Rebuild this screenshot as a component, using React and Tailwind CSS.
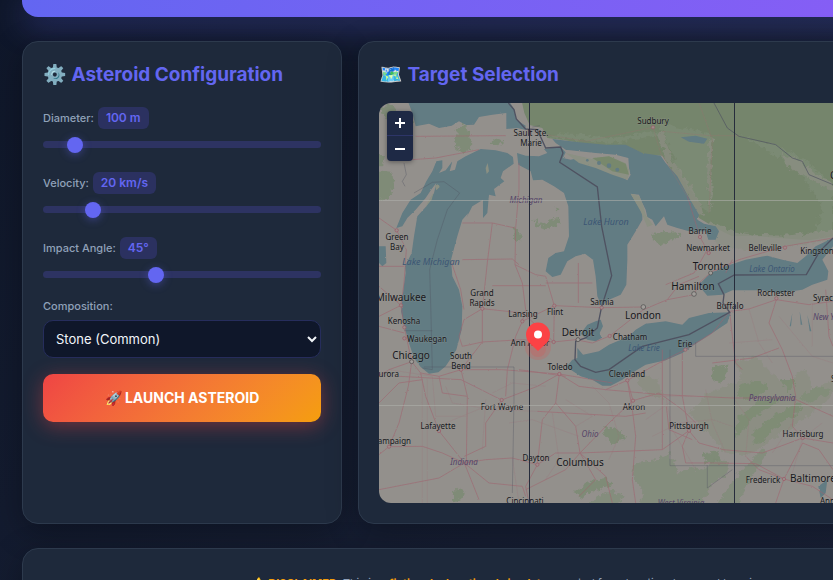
import { useState } from "react";

// city labels: [text, x, y, size, anchor]
const cities = [
  ["Sault Ste.", 152, 33, 8],
  ["Marie", 152, 43, 8],
  ["Sudbury", 274, 21, 8],
  ["Green", 18, 137, 8],
  ["Bay", 18, 147, 8],
  ["Milwaukee", 22, 198, 10],
  ["Kenosha", 25, 221, 8],
  ["Waukegan", 48, 239, 8],
  ["Chicago", 32, 256, 10],
  ["Grand", 103, 193, 8],
  ["Rapids", 103, 203, 8],
  ["Lansing", 144, 214, 8],
  ["Flint", 176, 212, 8],
  ["Sarnia", 223, 202, 8],
  ["London", 264, 216, 10],
  ["Detroit", 199, 233, 10],
  ["Chatham", 251, 237, 8],
  ["Ann Arbor", 151, 243, 8],
  ["Barrie", 321, 131, 8],
  ["Newmarket", 329, 148, 8],
  ["Toronto", 332, 167, 10],
  ["Hamilton", 314, 187, 10],
  ["Belleville", 386, 148, 8],
  ["Kingston", 438, 151, 8],
  ["Rochester", 397, 193, 8],
  ["Syracuse", 434, 198, 8, "start"],
  ["Buffalo", 351, 206, 8],
  ["Erie", 306, 244, 8],
  ["Toledo", 181, 267, 8],
  ["South", 82, 256, 8],
  ["Bend", 82, 266, 8],
  ["Cleveland", 248, 274, 8],
  ["Akron", 255, 307, 8],
  ["Fort Wayne", 123, 307, 8],
  ["Lafayette", 59, 326, 8],
  ["Champaign", 32, 341, 8, "end"],
  ["Aurora", 20, 274, 8, "end"],
  ["Dayton", 157, 358, 8],
  ["Columbus", 201, 363, 10],
  ["Cincinnati", 146, 401, 8],
  ["Pittsburgh", 310, 326, 8],
  ["Harrisburg", 424, 334, 8],
  ["Frederick", 384, 380, 8],
  ["Baltimore", 434, 379, 10],
  ["Annapolis", 441, 401, 8, "start"],
  ["Scranton", 452, 279, 8, "start"],
  ["Ottawa", 451, 76, 10, "start"],
];

const regions = [
  ["Michigan", 147, 100, 8],
  ["Indiana", 85, 362, 8],
  ["Ohio", 211, 334, 8],
  ["Pennsylvania", 393, 298, 8],
  ["West Virginia", 302, 403, 8],
  ["New York", 434, 217, 8, "start"],
];

const lakes = [
  ["Lake Huron", 227, 122, 9],
  ["Lake Michigan", 52, 162, 9],
  ["Lake Ontario", 393, 169, 8],
  ["Lake Erie", 265, 248, 8],
];

const towns = [
  [822, 73], [53, 382], [66, 607], [76, 673], [76, 706], [98, 776], [310, 617],
  [430, 655], [526, 608], [668, 614], [597, 710], [692, 699], [524, 717],
  [963, 402], [989, 450], [1218, 434], [1192, 586], [919, 740], [541, 813],
  [246, 800], [745, 832], [762, 893], [368, 891], [180, 984], [475, 1085],
  [930, 983], [1271, 1005], [1215, 1128], [30, 1031],
];

const panel =
  "rounded-2xl border border-[#2d3a4d] bg-[#1e293b] shadow-[0_8px_32px_rgba(0,0,0,0.3)]";

function Label({ item, fill, italic }) {
  const [text, x, y, size, anchor = "middle"] = item;
  return (
    <text
      x={x}
      y={y}
      fontSize={size}
      textAnchor={anchor}
      fill={fill}
      stroke="#a09d99"
      strokeOpacity={italic ? 0 : 0.35}
      strokeWidth="1"
      paintOrder="stroke"
      fontStyle={italic ? "italic" : "normal"}
    >
      {text}
    </text>
  );
}

function GreatLakesMap() {
  return (
    <svg
      viewBox="0 0 598 400"
      preserveAspectRatio="xMinYMin slice"
      className="h-full w-full font-['Noto_Sans',sans-serif]"
      role="img"
      aria-label="Map of the Great Lakes"
    >
      <defs>
        {/* ragged edges for woods, coastlines and roads */}
        <filter id="woods" x="-5%" y="-5%" width="110%" height="110%">
          <feTurbulence type="fractalNoise" baseFrequency="0.06" numOctaves="4" seed="4" />
          <feDisplacementMap in="SourceGraphic" scale="26" xChannelSelector="R" yChannelSelector="G" />
          <feGaussianBlur stdDeviation="0.5" />
        </filter>
        <filter id="coast" x="-5%" y="-5%" width="110%" height="110%">
          <feTurbulence type="fractalNoise" baseFrequency="0.12" numOctaves="3" seed="9" />
          <feDisplacementMap in="SourceGraphic" scale="5" xChannelSelector="R" yChannelSelector="G" />
        </filter>
      </defs>

      <g transform="scale(0.333333)">
        <rect width="1800" height="1200" fill="#93908c" />

        {/* northern woods */}
        <g filter="url(#coast)">
          <path
            fill="#74856c"
            d="M425 -20H1820V390L1362 400L1290 412L1200 405L1120 398L1060 400L1010 375L960 345L925 280L880 205L850 158L740 150L640 128L560 112L505 105L490 75L452 66L436 30Z"
          />
        </g>
        <g filter="url(#woods)">
          <path
            fill="#7d8b76"
            opacity=".7"
            d="M840 60L870 130L900 210L960 300L990 330L985 220L1000 110L990 90ZM1080 98L1200 130L1290 180L1362 245V400L1310 390L1330 310L1270 220L1180 150ZM505 105L700 120L830 98L840 85L700 105L560 90Z"
          />
          <path
            fill="#918f88"
            opacity=".6"
            d="M1205 150L1255 170L1290 195L1315 215L1362 240V262L1320 245L1280 220L1240 205L1215 175ZM835 90L850 85L880 170L930 240L965 300L975 345L950 325L905 245L870 195ZM988 110L1000 115L997 190L1002 270L992 330L985 220Z"
          />
          <path
            fill="#8c8e84"
            opacity=".8"
            d="M990 350L1050 382L1120 395L1220 398L1362 380V410L1260 425L1080 440L1010 420Z"
          />
        </g>

        {/* smaller forests */}
        <g filter="url(#woods)">
          <g fill="#788a70" opacity=".75">
            <path d="M230 80L260 70L270 95L280 140L250 150L228 130ZM340 105L378 115L360 130L338 122ZM245 48L285 42L275 62L250 65ZM-10 205L40 210L46 260L20 290H-10ZM-10 150L18 155L12 190H-10ZM0 15L40 5L60 30L100 60V80L50 50L20 45Z" />
            <path d="M465 350L495 365L520 345L540 350L545 362L505 375L470 365ZM530 310L542 318L535 330ZM408 370L425 385L424 415L404 412ZM820 390L890 385L905 400L850 425L822 415Z" />
            <path d="M1000 790L1045 785L1040 825L1020 842L995 825ZM1080 850L1110 835L1165 840L1160 870L1110 890L1075 880ZM1205 830L1240 825L1252 850L1225 865Z" />
            <path d="M1120 990L1180 940L1260 900L1275 910L1240 940L1180 980L1150 1020L1125 1025ZM1080 940L1140 890L1220 880L1180 910L1120 945L1090 990L1065 1005Z" />
            <path d="M670 970L720 980L740 1005L700 1025L675 1000ZM620 1140L680 1125L700 1145L650 1160L610 1185L580 1170ZM225 1165L250 1155L260 1180L230 1195ZM975 1050L1020 1045L1030 1075L980 1080Z" />
          </g>
          <g fill="#7c8b74" opacity=".6">
            <path d="M770 1080L840 1070L870 1050L900 1110L930 1095L980 1100L1000 1070L1050 1075L1040 1120L1000 1140L960 1220H780L790 1160L760 1120Z" />
            <path d="M1130 1060L1150 1035L1165 1060L1130 1100L1100 1150L1070 1220H1010L1050 1150L1090 1100ZM1260 880L1320 850L1362 860L1290 900ZM625 1200L700 1160L740 1180L700 1220Z" />
          </g>
          <path
            fill="#7d8b74"
            opacity=".35"
            d="M930 930L990 870L1090 830L1070 780L1130 760L1210 840L1280 800L1300 860L1362 830V880L1260 960L1180 1010L1100 1060L1040 1050L1000 1010ZM760 810L840 830L850 890L790 860Z"
          />
        </g>

        {/* lakes */}
        <g fill="#627b83" filter="url(#coast)">
          <path d="M85 -10H388L405 18L412 50L440 68L438 80L415 75L382 78V30L340 35L300 42L285 65L262 66L240 55L218 68L180 75L150 62L110 70L100 30Z" />
          <path d="M52 375L70 330L95 290L125 270L142 235L160 205L172 175L190 172L190 195L180 210L200 202L220 175L212 205L228 200L235 175L260 160L305 138L350 142L385 150L402 162L404 182L372 205L365 225L376 235L345 258L350 280L330 275L325 330L312 345L312 290L280 310L262 345L268 330L250 350L235 400L216 470L220 520L240 560L250 610L248 680L232 740L212 772L200 790L178 808L150 812L125 792L105 765L90 720L76 670L66 625L75 545L80 510L78 490L98 450L105 400L115 340L142 310L165 270L172 240L158 258L140 285L110 320L85 345L70 370Z" />
          <path d="M414 150L440 158L480 160L505 150L495 138L545 132L560 148L552 165L575 170L600 165L620 180L680 195L745 232L755 215L750 195L748 165L710 155L650 150L560 140L530 120L520 108L600 118L680 125L740 125L790 150L845 158L860 180L895 220L925 275L960 335L955 350L975 362L1010 370L1020 385L1010 410L988 410L980 385L930 385L895 375L865 365L855 340L830 370L820 350L805 342L800 320L790 300L780 275L755 272L775 305L790 330L790 350L770 385L745 425L745 470L742 545L725 575L690 590L668 610L655 580L650 520L642 470L618 452L590 460L565 475L545 515L520 522L500 505L508 465L530 450L555 445L570 400L568 310L555 270L525 250L490 230L462 232L455 205L418 185Z" />
          <path d="M665 650L672 670L662 690L668 705L650 715L625 710L605 692L625 665L650 655Z" />
          <path d="M595 735L612 755L660 745L690 725L750 700L770 680L800 662L860 655L910 665L930 645L990 630L1055 628L1045 660L1000 690L950 722L910 750L860 772L800 785L755 812L730 830L695 848L670 848L640 830L605 820L575 800L560 795L580 770L595 765Z" />
          <path d="M970 560L965 540L995 510L1040 490L1100 470L1165 458L1210 470L1255 480L1280 460L1310 430L1362 405V430L1330 470L1348 505L1345 530L1300 545L1270 560L1200 570L1150 562L1060 562L1030 575L985 578Z" />
          <path d="M905 103L950 98L985 107L975 122L930 116ZM-10 430L20 430L22 480L10 490L-10 470ZM1318 1150L1345 1130L1340 1170L1325 1185ZM1262 625l8 40h-5zM1285 635l12 50h-5zM1240 630l-8 40h4z" />
        </g>

        {/* islands */}
        <g fill="#8b9083" filter="url(#coast)">
          <path d="M168 248L178 243L182 252L172 262ZM560 150L640 168L690 160L740 180L752 205L745 230L700 215L650 195L600 180ZM755 272L780 278L792 305L800 335L822 365L805 372L785 325ZM320 195l6-15 4 25-7 8z" />
          <path d="M150 290L164 268L158 290L140 312Z" />
          <path d="M640 165L690 160L740 182L750 215L700 205Z" fill="#78886c" />
        </g>
        <g fill="#627b83">
          <circle cx="660" cy="180" r="6" />
          <circle cx="690" cy="188" r="7" />
          <circle cx="715" cy="200" r="6" />
          <circle cx="625" cy="172" r="4" />
        </g>

        {/* roads */}
        <g filter="url(#coast)">
          <g fill="none" stroke="#a0626e" strokeWidth="2.5" opacity=".65">
            <path d="M0 345L53 382L82 440L75 540L66 607L76 673L98 776L125 810L180 820L246 800L368 800L541 813L600 850L680 860L745 832L840 780L919 740L1000 690L1052 625L1110 618L1192 590L1290 605L1362 595" />
            <path d="M420 180V260L410 375L408 485L470 515L500 520L526 608L524 717L590 710L640 720L692 699L793 620L865 590L945 575L960 540L1000 505L1080 470L1218 430L1362 405" />
            <path d="M526 608L668 614L793 612M430 655L526 608M310 617L255 650L240 700L250 730L310 717L430 710L524 717M310 617L430 630L470 665L524 717M310 617V717L246 800M408 485L430 540L440 620L430 655L410 700L385 800L380 880" />
            <path d="M218 480L245 560L255 620M250 360H340L326 470L310 617M250 470L400 468L420 485M340 548H500M500 540H640M598 480V600M0 490H75M0 550L66 607L0 640M0 670L76 690M340 360L408 375" />
            <path d="M0 818L30 800L98 776L88 850L60 960L30 1031L0 1055M30 1031L130 1030L190 1050L256 1080L320 1070L400 1065L475 1085L530 1050L603 1050M125 810L140 880L180 984L256 1080L180 1125L0 1160M246 800L265 880L262 1080M256 1080L300 1190M256 1080L330 1140L430 1150L440 1180M368 891L320 960L320 1030L256 1060M60 820L246 830L368 891L475 850L541 813" />
            <path d="M541 813L530 900L490 950L475 1085L440 1150L450 1200M603 1050L590 970L530 900M603 1050L560 1100L440 1160M603 1050L680 1120L700 1200M603 1050L650 1130L600 1180M603 1050L700 950L762 893L745 832M603 1050L850 1040L930 983L960 1020L1033 1040L1150 1050L1271 1005L1362 1020" />
            <path d="M680 860L850 875L1060 885L1240 885L1362 940M745 832L760 920L770 1000L760 1130L770 1200M762 893L840 870L910 920L950 960M910 750V880L930 983L910 1030L920 1080L1000 1080L1130 1082L1215 1128M1052 625L1060 700L1070 780L1090 800M1192 590L1170 660L1210 740L1240 820L1250 880L1240 970L1271 1005" />
            <path d="M1215 1128L1271 1020L1320 1040L1362 1100M1215 1128L1300 1150L1362 1190M1215 1128L1190 1200M1215 1128L1140 1100L1100 1060M940 1010L870 980L862 910M850 740V930L850 1040M180 820L190 870L265 880M420 800L560 820M0 900L60 840L130 830M541 813L700 840M475 925L740 940L800 930" />
            <path d="M100 170L170 165L300 140M110 100L380 98M860 545L945 510L985 440M865 590L900 545L960 520M1000 780L1120 765L1200 735M1340 560L1350 700L1362 730M1060 470L1040 510M925 280L963 402L989 450" />
          </g>
          <g fill="none" stroke="#95716f" strokeWidth="2" opacity=".5">
            <path d="M822 73L740 90L620 115L500 95M822 73L845 150L925 280M960 0L1000 110L990 330M850 85L990 98L1080 98" />
          </g>
          <g fill="none" stroke="#9a6f78" strokeWidth="1.3" opacity=".55">
            <path d="M30 800L160 820L170 940L260 940M130 830V1200M145 830V1200M320 890L310 1040M200 960L320 910M200 850L220 900L340 920L475 925M390 960L460 950L600 1000M400 1065L420 1200M340 870L400 840L500 850M560 890L640 940L590 970M520 930L540 1070L500 1130M640 850L690 900L720 1000L690 1070" />
            <path d="M860 880L880 980L950 1100M800 880L940 880M820 1000L900 960L1000 950L1060 970M800 950L870 900M980 860L1000 960L1040 1050M1060 880L1110 950L1100 1060M1180 1050L1240 960M1271 1005L1240 1110M1271 1005L1330 960M1200 640L1300 760L1362 780M1110 618L1140 720L1180 780M1050 720L1180 710M1300 600V730" />
          </g>
        </g>

        {/* borders */}
        <g fill="none" stroke="#4f5261" strokeWidth="4">
          <path d="M388 0L405 20L412 48L440 78L475 80L500 135L545 132L552 150L542 178L655 252L668 370L698 518L668 610L655 675L620 705L590 715L588 770L605 790L650 808L690 800L790 730L930 695L1052 628L1032 600L1035 575L1018 542L1066 516L1282 515L1322 445L1362 405" />
          <path
            d="M1005 0L1045 75L1080 100L1190 125L1240 165L1270 175L1290 215L1362 245"
            strokeWidth="2.5"
            opacity=".8"
          />
          <path
            d="M105 270L160 238L195 236L242 270L205 320L175 410L152 500L155 600L160 800L130 795M76 683H160M135 792H405V890L400 1170M950 718V760H1362M873 740V1088H1362M985 1088V1155L1060 1100M460 72L483 68M75 180L82 215L70 235L78 250"
            strokeWidth="2"
            opacity=".55"
          />
        </g>
        <g fill="none" stroke="#9b5968" strokeWidth="2">
          {towns.map(([x, y]) => (
            <circle key={`${x}-${y}`} cx={x} cy={y} r="5" fill="#9a8c89" />
          ))}
        </g>
        <g fill="#a09d99" stroke="#4b4b4b" strokeWidth="2">
          <circle cx="793" cy="612" r="7" />
          <circle cx="945" cy="573" r="7" />
          <circle cx="995" cy="510" r="6" />
          <circle cx="597" cy="710" r="6" />
          <circle cx="98" cy="776" r="6" />
        </g>
      </g>

      {lakes.map((l) => (
        <Label key={l[0]} item={l} fill="#3c5674" italic />
      ))}
      {regions.map((r) => (
        <Label key={r[0]} item={r} fill="#554468" italic />
      ))}
      {cities.map((c) => (
        <Label key={c[0]} item={c} fill="#16181c" />
      ))}

      {/* tile seams */}
      <path d="M150.5 0V400M355.5 0V400M560.5 0V400" stroke="#262c3c" />
      <path d="M0 97.5H598M0 302.5H598" stroke="#aeb0ab" opacity=".6" />

      {/* impact marker */}
      <circle cx="159" cy="244" r="13" fill="#ef4444" opacity=".18" />
      <circle cx="159" cy="246" r="8" fill="#ef4444" opacity=".18" />
      <path d="M159 248L150 239.5A12 12 0 1 1 168 239.5Z" fill="#fb4245" />
      <circle cx="159" cy="231.500" r="4" fill="#fff" />
    </svg>
  );
}

function SliderField({ id, label, unit, min, max, value, onChange }) {
  return (
    <div className="mb-3 flex flex-col">
      <div className="flex h-[30px] items-center gap-1">
        <label htmlFor={id} className="text-[11px] font-medium text-slate-400">
          {label}
        </label>
        <output
          htmlFor={id}
          className="rounded-md bg-[#2b3160] px-2 py-[3px] text-xs font-semibold text-[#6366f1]"
        >
          {value}
          {unit}
        </output>
      </div>
      <input
        id={id}
        type="range"
        min={min}
        max={max}
        value={value}
        onChange={(e) => onChange(Number(e.target.value))}
        className="my-2 h-[7px] w-full cursor-pointer appearance-none rounded-full bg-[#2d3362] outline-none [&::-webkit-slider-thumb]:h-4 [&::-webkit-slider-thumb]:w-4 [&::-webkit-slider-thumb]:appearance-none [&::-webkit-slider-thumb]:rounded-full [&::-webkit-slider-thumb]:bg-[#6366f1] [&::-webkit-slider-thumb]:shadow-[0_2px_8px_rgba(99,102,241,0.4)]"
      />
    </div>
  );
}

export default function App() {
  const [diameter, setDiameter] = useState(100);
  const [velocity, setVelocity] = useState(20);
  const [angle, setAngle] = useState(45);
  const [composition, setComposition] = useState("stone");

  return (
    <div className="h-screen overflow-hidden bg-linear-135 from-[#0f172a] to-[#1a2238] font-[Inter,sans-serif] text-slate-100">
      <div className="flex min-w-[1020px] flex-col gap-6 px-[22px]">
        <header className="h-[17px] rounded-b-2xl bg-linear-90 from-[#6366f1] to-[#8b5cf6] shadow-[0_8px_32px_rgba(99,102,241,0.4)]" />

        <main className="grid grid-cols-[320px_1fr] gap-4">
          {/* CONFIG */}
          <section className={`${panel} p-5`}>
            <h2 className="mb-4 text-[19px] leading-[25px] font-bold text-[#6366f1]">
              ⚙️ Asteroid Configuration
            </h2>

            <SliderField
              id="diameter"
              label="Diameter:"
              unit=" m"
              min={10}
              max={1000}
              value={diameter}
              onChange={setDiameter}
            />
            <SliderField
              id="velocity"
              label="Velocity:"
              unit=" km/s"
              min={10}
              max={72}
              value={velocity}
              onChange={setVelocity}
            />
            <SliderField
              id="angle"
              label="Impact Angle:"
              unit="°"
              min={15}
              max={90}
              value={angle}
              onChange={setAngle}
            />

            <label
              htmlFor="composition"
              className="mb-1.5 block text-[11px] leading-4 font-medium text-slate-400"
            >
              Composition:
            </label>
            <select
              id="composition"
              value={composition}
              onChange={(e) => setComposition(e.target.value)}
              className="block h-[38px] w-full rounded-[10px] border border-[#262d5c] bg-[#0f172a] px-2 text-[13px] text-slate-100"
            >
              <option value="stone">Stone (Common)</option>
              <option value="iron">Iron (Dense)</option>
              <option value="ice">Ice (Comet)</option>
            </select>

            <button
              type="button"
              className="mt-4 h-12 w-full cursor-pointer rounded-[10px] bg-linear-135 from-[#ef4444] to-[#f59e0b] text-sm font-bold text-white shadow-[0_4px_20px_rgba(239,68,68,0.4)]"
            >
              🚀 LAUNCH ASTEROID
            </button>
          </section>

          {/* MAP */}
          <section className={`${panel} p-5`}>
            <h2 className="mb-4 text-[19px] leading-[25px] font-bold text-[#6366f1]">
              🗺️ Target Selection
            </h2>
            <div className="relative h-[400px] overflow-hidden rounded-xl">
              <GreatLakesMap />
              <div className="absolute top-2 left-2 flex w-[26px] flex-col overflow-hidden rounded-sm bg-[#1e2945] shadow-[0_1px_5px_rgba(0,0,0,0.4)]">
                <button
                  type="button"
                  aria-label="Zoom in"
                  className="flex h-[25px] items-center justify-center border-b border-[#2d3568]"
                >
                  <svg viewBox="0 0 12 12" className="h-3 w-3">
                    <path d="M6 1V11M1 6H11" stroke="#fff" strokeWidth="2" />
                  </svg>
                </button>
                <button
                  type="button"
                  aria-label="Zoom out"
                  className="flex h-[25px] items-center justify-center"
                >
                  <svg viewBox="0 0 12 12" className="h-3 w-3">
                    <path d="M1 6H11" stroke="#fff" strokeWidth="2" />
                  </svg>
                </button>
              </div>
            </div>
          </section>
        </main>

        <footer className={`${panel} p-6 text-center text-[11px] leading-5 text-slate-400`}>
          <p>
            <strong className="text-[#f59e0b]">⚠️ DISCLAIMER:</strong> This is a{" "}
            <strong className="text-[#f59e0b]">
              fictional educational simulator
            </strong>{" "}
            created for educational use and learning.
          </p>
        </footer>
      </div>
    </div>
  );
}
